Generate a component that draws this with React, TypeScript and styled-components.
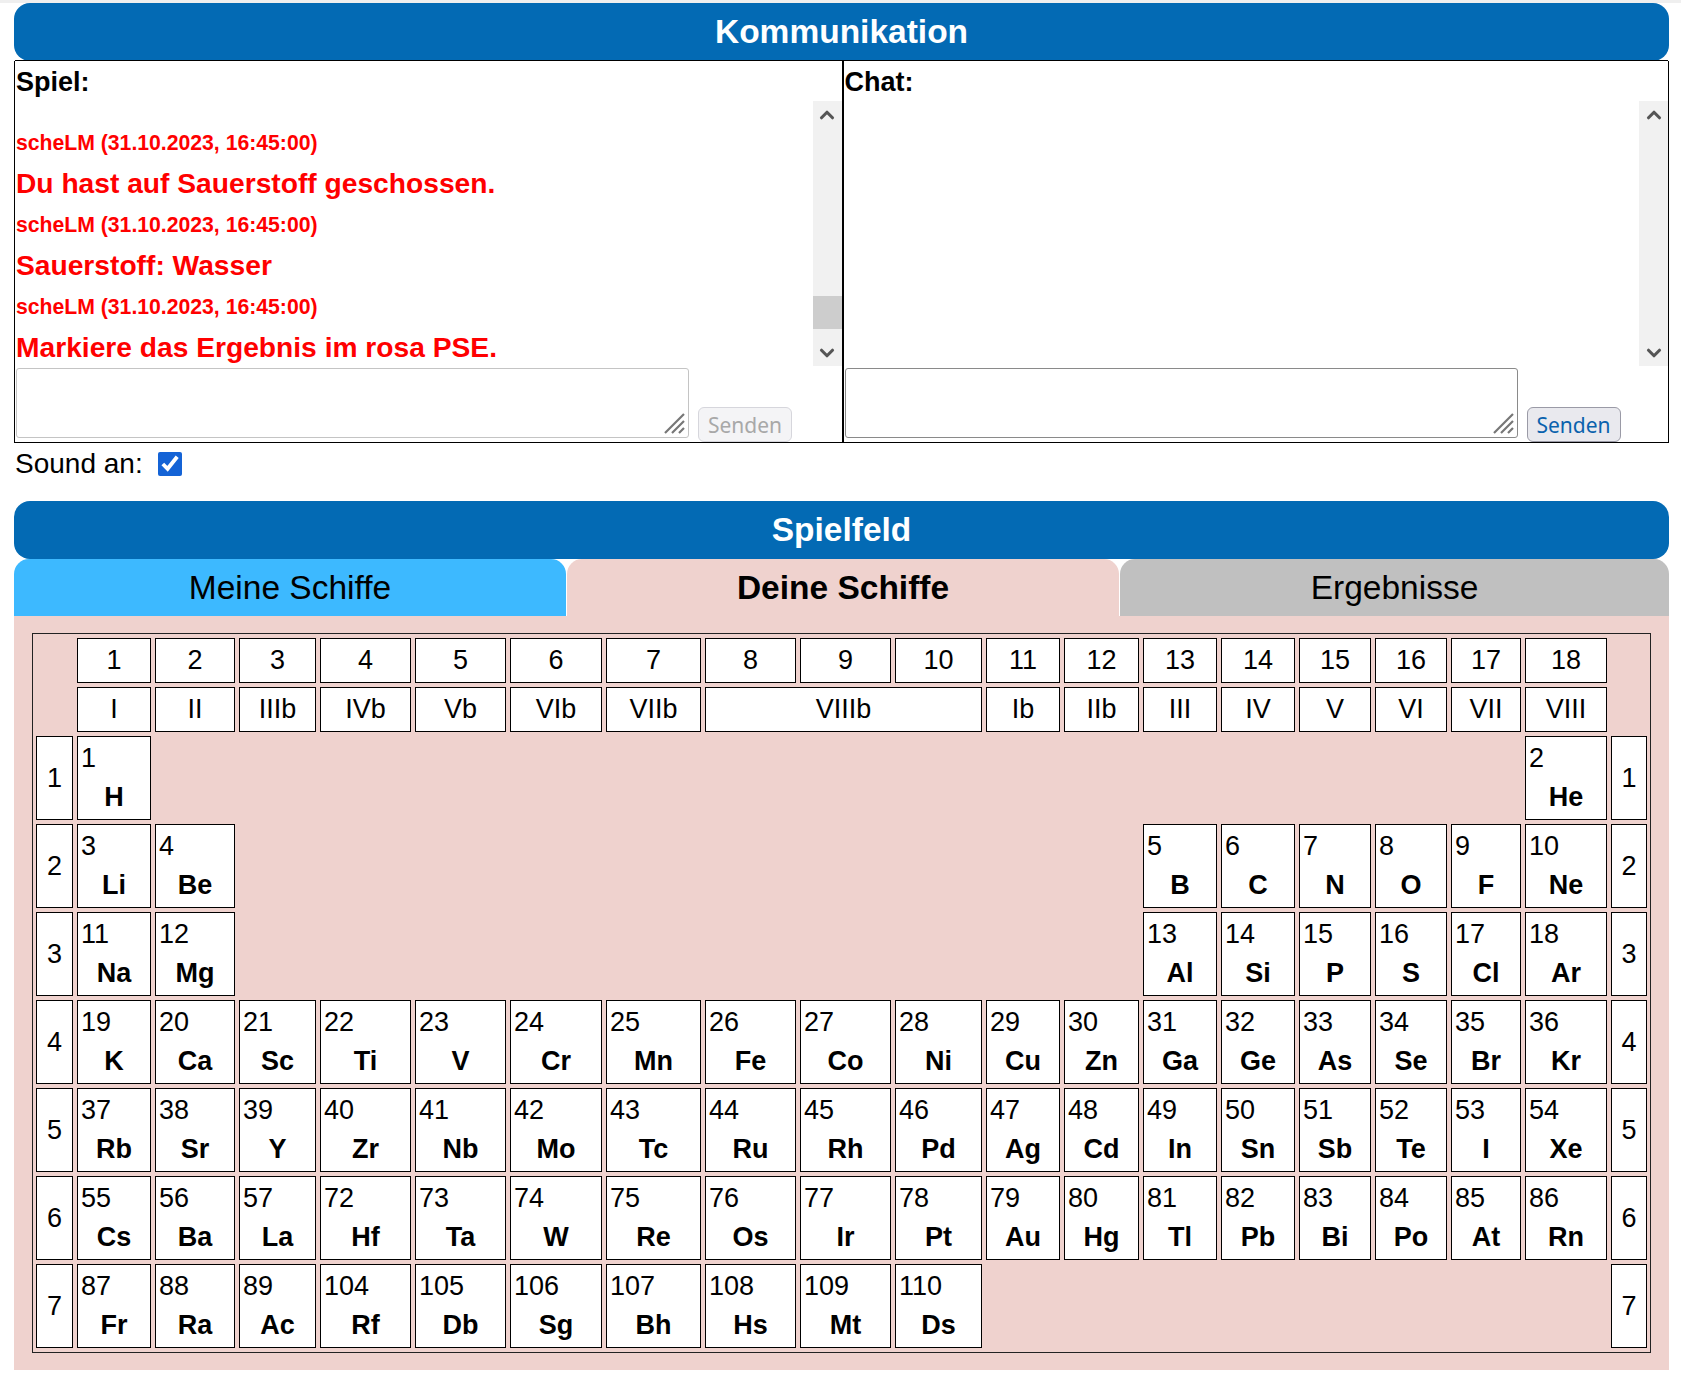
import React from 'react';
import styled, { createGlobalStyle } from 'styled-components';
import { ChevronUp, ChevronDown } from 'lucide-react';

const GlobalStyle = createGlobalStyle`
  html {
    border-top: 3px solid #efefef;
  }
  body {
    margin: 0 12px 0 14px;
    background: #fff;
    color: #000;
    font-family: "Liberation Sans", Arial, sans-serif;
  }
`;

type Element = [number, number, string];

const periods: Element[][] = [
  [[1, 1, 'H'], [18, 2, 'He']],
  [[1, 3, 'Li'], [2, 4, 'Be'], [13, 5, 'B'], [14, 6, 'C'], [15, 7, 'N'], [16, 8, 'O'], [17, 9, 'F'], [18, 10, 'Ne']],
  [[1, 11, 'Na'], [2, 12, 'Mg'], [13, 13, 'Al'], [14, 14, 'Si'], [15, 15, 'P'], [16, 16, 'S'], [17, 17, 'Cl'], [18, 18, 'Ar']],
  ['K', 'Ca', 'Sc', 'Ti', 'V', 'Cr', 'Mn', 'Fe', 'Co', 'Ni', 'Cu', 'Zn', 'Ga', 'Ge', 'As', 'Se', 'Br', 'Kr'].map(
    (s, i) => [i + 1, 19 + i, s] as Element
  ),
  ['Rb', 'Sr', 'Y', 'Zr', 'Nb', 'Mo', 'Tc', 'Ru', 'Rh', 'Pd', 'Ag', 'Cd', 'In', 'Sn', 'Sb', 'Te', 'I', 'Xe'].map(
    (s, i) => [i + 1, 37 + i, s] as Element
  ),
  [
    [1, 55, 'Cs'], [2, 56, 'Ba'], [3, 57, 'La'], [4, 72, 'Hf'], [5, 73, 'Ta'], [6, 74, 'W'], [7, 75, 'Re'],
    [8, 76, 'Os'], [9, 77, 'Ir'], [10, 78, 'Pt'], [11, 79, 'Au'], [12, 80, 'Hg'], [13, 81, 'Tl'], [14, 82, 'Pb'],
    [15, 83, 'Bi'], [16, 84, 'Po'], [17, 85, 'At'], [18, 86, 'Rn'],
  ],
  [
    [1, 87, 'Fr'], [2, 88, 'Ra'], [3, 89, 'Ac'], [4, 104, 'Rf'], [5, 105, 'Db'], [6, 106, 'Sg'], [7, 107, 'Bh'],
    [8, 108, 'Hs'], [9, 109, 'Mt'], [10, 110, 'Ds'],
  ],
];

// group labels, [start group, span, text]
const romans: [number, number, string][] = [
  [1, 1, 'I'], [2, 1, 'II'], [3, 1, 'IIIb'], [4, 1, 'IVb'], [5, 1, 'Vb'], [6, 1, 'VIb'], [7, 1, 'VIIb'],
  [8, 3, 'VIIIb'], [11, 1, 'Ib'], [12, 1, 'IIb'], [13, 1, 'III'], [14, 1, 'IV'], [15, 1, 'V'], [16, 1, 'VI'],
  [17, 1, 'VII'], [18, 1, 'VIII'],
];

const log = [
  { kind: 'name', text: 'scheLM (31.10.2023, 16:45:00)' },
  { kind: 'text', text: 'Du hast auf Sauerstoff geschossen.' },
  { kind: 'name', text: 'scheLM (31.10.2023, 16:45:00)' },
  { kind: 'text', text: 'Sauerstoff: Wasser' },
  { kind: 'name', text: 'scheLM (31.10.2023, 16:45:00)' },
  { kind: 'text', text: 'Markiere das Ergebnis im rosa PSE.' },
];

const ScrollBar = ({ thumb }: { thumb?: boolean }) => (
  <S.Scroll>
    <S.ScrollBtn>
      <ChevronUp size={22} strokeWidth={3.4} />
    </S.ScrollBtn>
    <S.Track>{thumb && <S.Thumb />}</S.Track>
    <S.ScrollBtn>
      <ChevronDown size={22} strokeWidth={3.4} />
    </S.ScrollBtn>
  </S.Scroll>
);

const MessageBox = ({ muted }: { muted?: boolean }) => (
  <S.InputWrap>
    <S.Input $muted={muted} />
    <S.Grip width="24" height="24" viewBox="0 0 24 24">
      <path d="M22 3 L3 22 M22 10 L10 22 M22 17 L17 22" stroke="#777" strokeWidth="2.2" fill="none" />
    </S.Grip>
  </S.InputWrap>
);

const App = () => {
  return (
    <>
      <GlobalStyle />
      <S.Banner>Kommunikation</S.Banner>
      <S.CommTable>
        <S.Pane>
          <S.PaneLabel>Spiel:</S.PaneLabel>
          <S.LogRow>
            <S.Log>
              {log.map((l, i) => (
                <S.LogLine key={i} $kind={l.kind}>
                  {l.text}
                </S.LogLine>
              ))}
            </S.Log>
            <ScrollBar thumb />
          </S.LogRow>
          <S.InputRow>
            <MessageBox muted />
            <S.SendBtn disabled>Senden</S.SendBtn>
          </S.InputRow>
        </S.Pane>
        <S.Pane>
          <S.PaneLabel>Chat:</S.PaneLabel>
          <S.LogRow>
            <S.Log />
            <ScrollBar />
          </S.LogRow>
          <S.InputRow>
            <MessageBox />
            <S.SendBtn>Senden</S.SendBtn>
          </S.InputRow>
        </S.Pane>
      </S.CommTable>

      <S.SoundRow>
        Sound an:
        <S.Check type="checkbox" defaultChecked />
      </S.SoundRow>

      <S.Banner>Spielfeld</S.Banner>
      <S.Tabs>
        <S.Tab $bg="#3db9ff">Meine Schiffe</S.Tab>
        <S.Tab $bg="#efd2ce" $active>
          Deine Schiffe
        </S.Tab>
        <S.Tab $bg="#c0c0c0">Ergebnisse</S.Tab>
      </S.Tabs>

      <S.Board>
        <S.Pse>
          {Array.from({ length: 18 }, (_, i) => (
            <S.HeadCell key={'g' + i} $col={i + 2} $row={1}>
              {i + 1}
            </S.HeadCell>
          ))}
          {romans.map(([g, span, t]) => (
            <S.HeadCell key={'r' + g} $col={g + 1} $span={span} $row={2}>
              {t}
            </S.HeadCell>
          ))}
          {periods.map((row, p) => (
            <React.Fragment key={p}>
              <S.PeriodCell $col={1} $row={p + 3}>
                {p + 1}
              </S.PeriodCell>
              {row.map(([g, num, sym]) => (
                <S.ElementCell key={sym} $col={g + 1} $row={p + 3}>
                  <S.Num>{num}</S.Num>
                  <S.Sym>{sym}</S.Sym>
                </S.ElementCell>
              ))}
              <S.PeriodCell $col={20} $row={p + 3}>
                {p + 1}
              </S.PeriodCell>
            </React.Fragment>
          ))}
        </S.Pse>
      </S.Board>
    </>
  );
};

export default App;

const S = {
  Banner: styled.div`
    height: 58px;
    display: flex;
    align-items: center;
    justify-content: center;
    background: #036ab4;
    color: #fff;
    border-radius: 16px;
    font-size: 33.5px;
    font-weight: bold;
  `,
  CommTable: styled.div`
    display: grid;
    grid-template-columns: 1fr 1fr;
    height: 382px;
    box-sizing: border-box;
    border: 1px solid #000;
    border-top: 0;
    & > div + div {
      border-left: 2px solid #000;
    }
  `,
  Pane: styled.div`
    display: flex;
    flex-direction: column;
    min-width: 0;
    padding-left: 1px;
    border-top: 1px solid #000;
    margin-top: -1px;
  `,
  PaneLabel: styled.div`
    height: 40px;
    line-height: 42px;
    font-size: 27px;
    font-weight: bold;
  `,
  LogRow: styled.div`
    display: flex;
    height: 265px;
  `,
  Log: styled.div`
    flex: 1;
    overflow: hidden;
    padding-top: 21px;
  `,
  LogLine: styled.div<{ $kind: string }>`
    line-height: 41px;
    height: 41px;
    color: #f00;
    font-weight: bold;
    font-size: ${({ $kind }) => ($kind === 'name' ? '21.2px' : '28.2px')};
    white-space: nowrap;
  `,
  Scroll: styled.div`
    width: 29px;
    display: flex;
    flex-direction: column;
    background: #f1f1f1;
  `,
  ScrollBtn: styled.div`
    height: 27px;
    display: flex;
    align-items: center;
    justify-content: center;
    color: #555;
  `,
  Track: styled.div`
    flex: 1;
    display: flex;
    flex-direction: column;
    justify-content: flex-end;
    padding-bottom: 10px;
  `,
  Thumb: styled.div`
    height: 33px;
    background: #cdcdcd;
  `,
  InputRow: styled.div`
    display: flex;
    align-items: flex-end;
    gap: 9px;
    margin-top: 2px;
    padding-bottom: 1px;
  `,
  InputWrap: styled.div`
    position: relative;
    display: flex;
    margin-bottom: 4px;
  `,
  Input: styled.textarea<{ $muted?: boolean }>`
    width: 673px;
    height: 70px;
    box-sizing: border-box;
    margin: 0;
    resize: none;
    border: 1px solid ${({ $muted }) => ($muted ? '#c4c4c4' : '#8a8a8a')};
    border-radius: 3px;
    background: #fff;
    font-family: "Liberation Mono", monospace;
    font-size: 16px;
  `,
  Grip: styled.svg`
    position: absolute;
    right: 3px;
    bottom: 3px;
  `,
  SendBtn: styled.button`
    width: 94px;
    height: 35px;
    padding: 0;
    border-radius: 6px;
    font-family: "Noto Sans", "Open Sans", sans-serif;
    font-size: 21px;
    border: 1px solid #9a9aa6;
    background: #e9e9ee;
    color: #0a62ad;
    &:disabled {
      border-color: #d6d6dc;
      background: #f4f4f6;
      color: #a8a8a8;
    }
  `,
  SoundRow: styled.div`
    height: 42px;
    display: flex;
    align-items: center;
    font-size: 28px;
    padding-left: 1px;
    margin-bottom: 16px;
  `,
  Check: styled.input`
    width: 24px;
    height: 24px;
    margin: 0 0 0 15px;
    accent-color: #1463d6;
  `,
  Tabs: styled.div`
    display: grid;
    grid-template-columns: 552px 552px 1fr;
    gap: 1px;
  `,
  Tab: styled.div<{ $bg: string; $active?: boolean }>`
    height: 57px;
    display: flex;
    align-items: center;
    justify-content: center;
    border-radius: 15px 15px 0 0;
    background: ${({ $bg }) => $bg};
    font-size: 33.5px;
    font-weight: ${({ $active }) => ($active ? 'bold' : 'normal')};
  `,
  Board: styled.div`
    background: #efd2ce;
    padding: 17px 18px 17px;
  `,
  Pse: styled.div`
    display: grid;
    grid-template-columns: 37px 74px 80px 77px 91px 91px 92px 95px 91px 91px 87px 74px 75px 74px 74px 72px 72px 70px 82px 36px;
    grid-template-rows: 45px 45px repeat(7, 84px);
    gap: 4px;
    padding: 4px 3px;
    border: 1px solid #222;
    font-size: 27px;
  `,
  HeadCell: styled.div<{ $col: number; $row: number; $span?: number }>`
    grid-column: ${({ $col, $span }) => `${$col} / span ${$span || 1}`};
    grid-row: ${({ $row }) => $row};
    display: flex;
    align-items: center;
    justify-content: center;
    background: #fff;
    border: 1px solid #000;
  `,
  PeriodCell: styled.div<{ $col: number; $row: number }>`
    grid-column: ${({ $col }) => $col};
    grid-row: ${({ $row }) => $row};
    display: flex;
    align-items: center;
    justify-content: center;
    background: #fff;
    border: 1px solid #000;
  `,
  ElementCell: styled.div<{ $col: number; $row: number }>`
    grid-column: ${({ $col }) => $col};
    grid-row: ${({ $row }) => $row};
    display: flex;
    flex-direction: column;
    background: #fff;
    border: 1px solid #000;
    padding: 6px 0 0 3px;
  `,
  Num: styled.div`
    line-height: 30px;
  `,
  Sym: styled.div`
    line-height: 30px;
    margin-top: 9px;
    padding-right: 3px;
    text-align: center;
    font-weight: bold;
  `,
};
